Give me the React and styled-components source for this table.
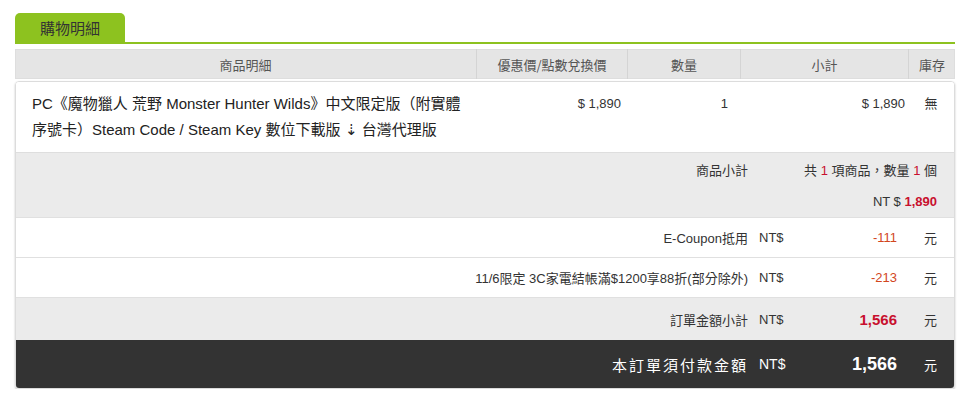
import React from "react";
import styled, { createGlobalStyle } from "styled-components";

const GlobalStyle = createGlobalStyle`
  html, body {
    margin: 0;
    padding: 0;
    background: #fff;
  }
  body {
    font-family: "Liberation Sans", Arial, "Noto Sans CJK TC", sans-serif;
    color: #333;
  }
`

const COLS = "461px 151px 113px 168px 47px"

const items = [
    {
        name: "PC《魔物獵人 荒野 Monster Hunter Wilds》中文限定版（附實體序號卡）Steam Code / Steam Key 數位下載版 ⇣ 台灣代理版",
        price: "$ 1,890",
        qty: "1",
        subtotal: "$ 1,890",
        stock: "無",
    },
]

const discounts = [
    { label: "E-Coupon抵用", amount: "-111" },
    { label: "11/6限定 3C家電結帳滿$1200享88折(部分除外)", amount: "-213" },
]

export default function App() {
    return (
        <Page>
            <GlobalStyle />
            <TabBar>
                <Tab>購物明細</Tab>
            </TabBar>
            <HeaderRow>
                <HeadCell>商品明細</HeadCell>
                <HeadCell>優惠價/點數兌換價</HeadCell>
                <HeadCell>數量</HeadCell>
                <HeadCell>小計</HeadCell>
                <HeadCell>庫存</HeadCell>
            </HeaderRow>
            <Card>
                {items.map((item, i) => (
                    <ProductRow key={i}>
                        <ProductName>{item.name}</ProductName>
                        <Cell $pr={6}>{item.price}</Cell>
                        <Cell $pr={12}>{item.qty}</Cell>
                        <Cell $pr={3}>{item.subtotal}</Cell>
                        <Cell $center>{item.stock}</Cell>
                    </ProductRow>
                ))}
                <SubtotalBlock>
                    <SubLine>
                        <Label>商品小計</Label>
                        <SubValue>
                            共 <Red>1</Red> 項商品，數量 <Red>1</Red> 個
                        </SubValue>
                    </SubLine>
                    <SubLine>
                        <span />
                        <SubValue>
                            NT $ <Red $bold>1,890</Red>
                        </SubValue>
                    </SubLine>
                </SubtotalBlock>
                {discounts.map((d, i) => (
                    <SumRow key={i}>
                        <Label>{d.label}</Label>
                        <Currency>NT$</Currency>
                        <Amount $tone="discount">{d.amount}</Amount>
                        <Unit>元</Unit>
                    </SumRow>
                ))}
                <SumRow $gray $h={42}>
                    <Label>訂單金額小計</Label>
                    <Currency>NT$</Currency>
                    <Amount $tone="total">1,566</Amount>
                    <Unit>元</Unit>
                </SumRow>
                <FooterRow>
                    <FooterLabel>本訂單須付款金額</FooterLabel>
                    <FooterCurrency>NT$</FooterCurrency>
                    <FooterAmount>1,566</FooterAmount>
                    <Unit $light>元</Unit>
                </FooterRow>
            </Card>
        </Page>
    )
}

const Page = styled.div`
  padding: 13px 8px 0 15px;
  width: 940px;
`
const TabBar = styled.div`
  display: flex;
  border-bottom: 2px solid #8dc21f;
`
const Tab = styled.div`
  width: 110px;
  height: 29px;
  background: #8dc21f;
  border-radius: 5px 5px 0 0;
  display: flex;
  align-items: center;
  justify-content: center;
  font-size: 15px;
  color: #333;
  font-family: "Noto Sans CJK TC", sans-serif;
`
const HeaderRow = styled.div`
  margin-top: 5px;
  display: grid;
  grid-template-columns: ${COLS};
  height: 30px;
  background: #e5e5e5;
  box-shadow: inset 0 0 0 1px #dedede;
`
const HeadCell = styled.div`
  display: flex;
  align-items: center;
  justify-content: center;
  font-size: 13px;
  color: #555;
  font-family: "Noto Sans CJK TC", sans-serif;
  & + & {
    border-left: 1px solid #d4d4d4;
  }
`
const Card = styled.div`
  margin-top: 2px;
  border: 1px solid #dcdcdc;
  border-radius: 4px;
  overflow: hidden;
  box-shadow: 0 1px 2px rgba(0, 0, 0, 0.25);
`
const ProductRow = styled.div`
  display: grid;
  grid-template-columns: 460px 151px 113px 168px 46px;
  padding: 9px 0 9px;
  background: #fff;
  font-size: 13px;
  line-height: 26px;
`
const ProductName = styled.div`
  padding: 0 12px 0 16px;
  font-size: 15px;
  line-height: 26px;
  color: #222;
  font-family: "Liberation Sans", Arial, "Noto Sans CJK TC", sans-serif;
`
const Cell = styled.div`
  text-align: ${p => (p.$center ? "center" : "right")};
  padding-right: ${p => p.$pr || 0}px;
  color: #333;
`
const SubtotalBlock = styled.div`
  background: #ebebeb;
  border-top: 1px solid #dedede;
  font-size: 13px;
`
const SubLine = styled.div`
  display: grid;
  grid-template-columns: 1fr 178px;
  align-items: center;
  height: 32px;
  padding-right: 17px;
`
const Label = styled.div`
  text-align: right;
  padding-right: 11px;
  color: #333;
`
const SubValue = styled.div`
  text-align: right;
`
const Red = styled.span`
  color: #c8102e;
  font-weight: ${p => (p.$bold ? 700 : 400)};
`
const SumRow = styled.div`
  display: grid;
  grid-template-columns: 1fr 48px 90px 40px;
  align-items: center;
  height: ${p => p.$h || 39}px;
  padding-right: 17px;
  border-top: 1px solid #e0e0e0;
  background: ${p => (p.$gray ? "#ebebeb" : "#fff")};
  font-size: 13px;
`
const Currency = styled.div`
  color: #333;
`
const Amount = styled.div`
  text-align: right;
  color: ${p => (p.$tone === "total" ? "#c8102e" : "#d2461e")};
  font-weight: ${p => (p.$tone === "total" ? 700 : 400)};
  font-size: ${p => (p.$tone === "total" ? "15px" : "13px")};
`
const Unit = styled.div`
  text-align: right;
  color: ${p => (p.$light ? "#fff" : "#333")};
`
const FooterRow = styled.div`
  display: grid;
  grid-template-columns: 1fr 48px 90px 40px;
  align-items: center;
  height: 48px;
  padding-right: 17px;
  background: #333;
  color: #fff;
  font-size: 13px;
`
const FooterLabel = styled.div`
  text-align: right;
  padding-right: 11px;
  font-size: 15px;
  letter-spacing: 2px;
  font-family: "Noto Sans CJK TC", sans-serif;
`
const FooterCurrency = styled.div`
  font-size: 14px;
`
const FooterAmount = styled.div`
  text-align: right;
  font-size: 18px;
  font-weight: 700;
`
